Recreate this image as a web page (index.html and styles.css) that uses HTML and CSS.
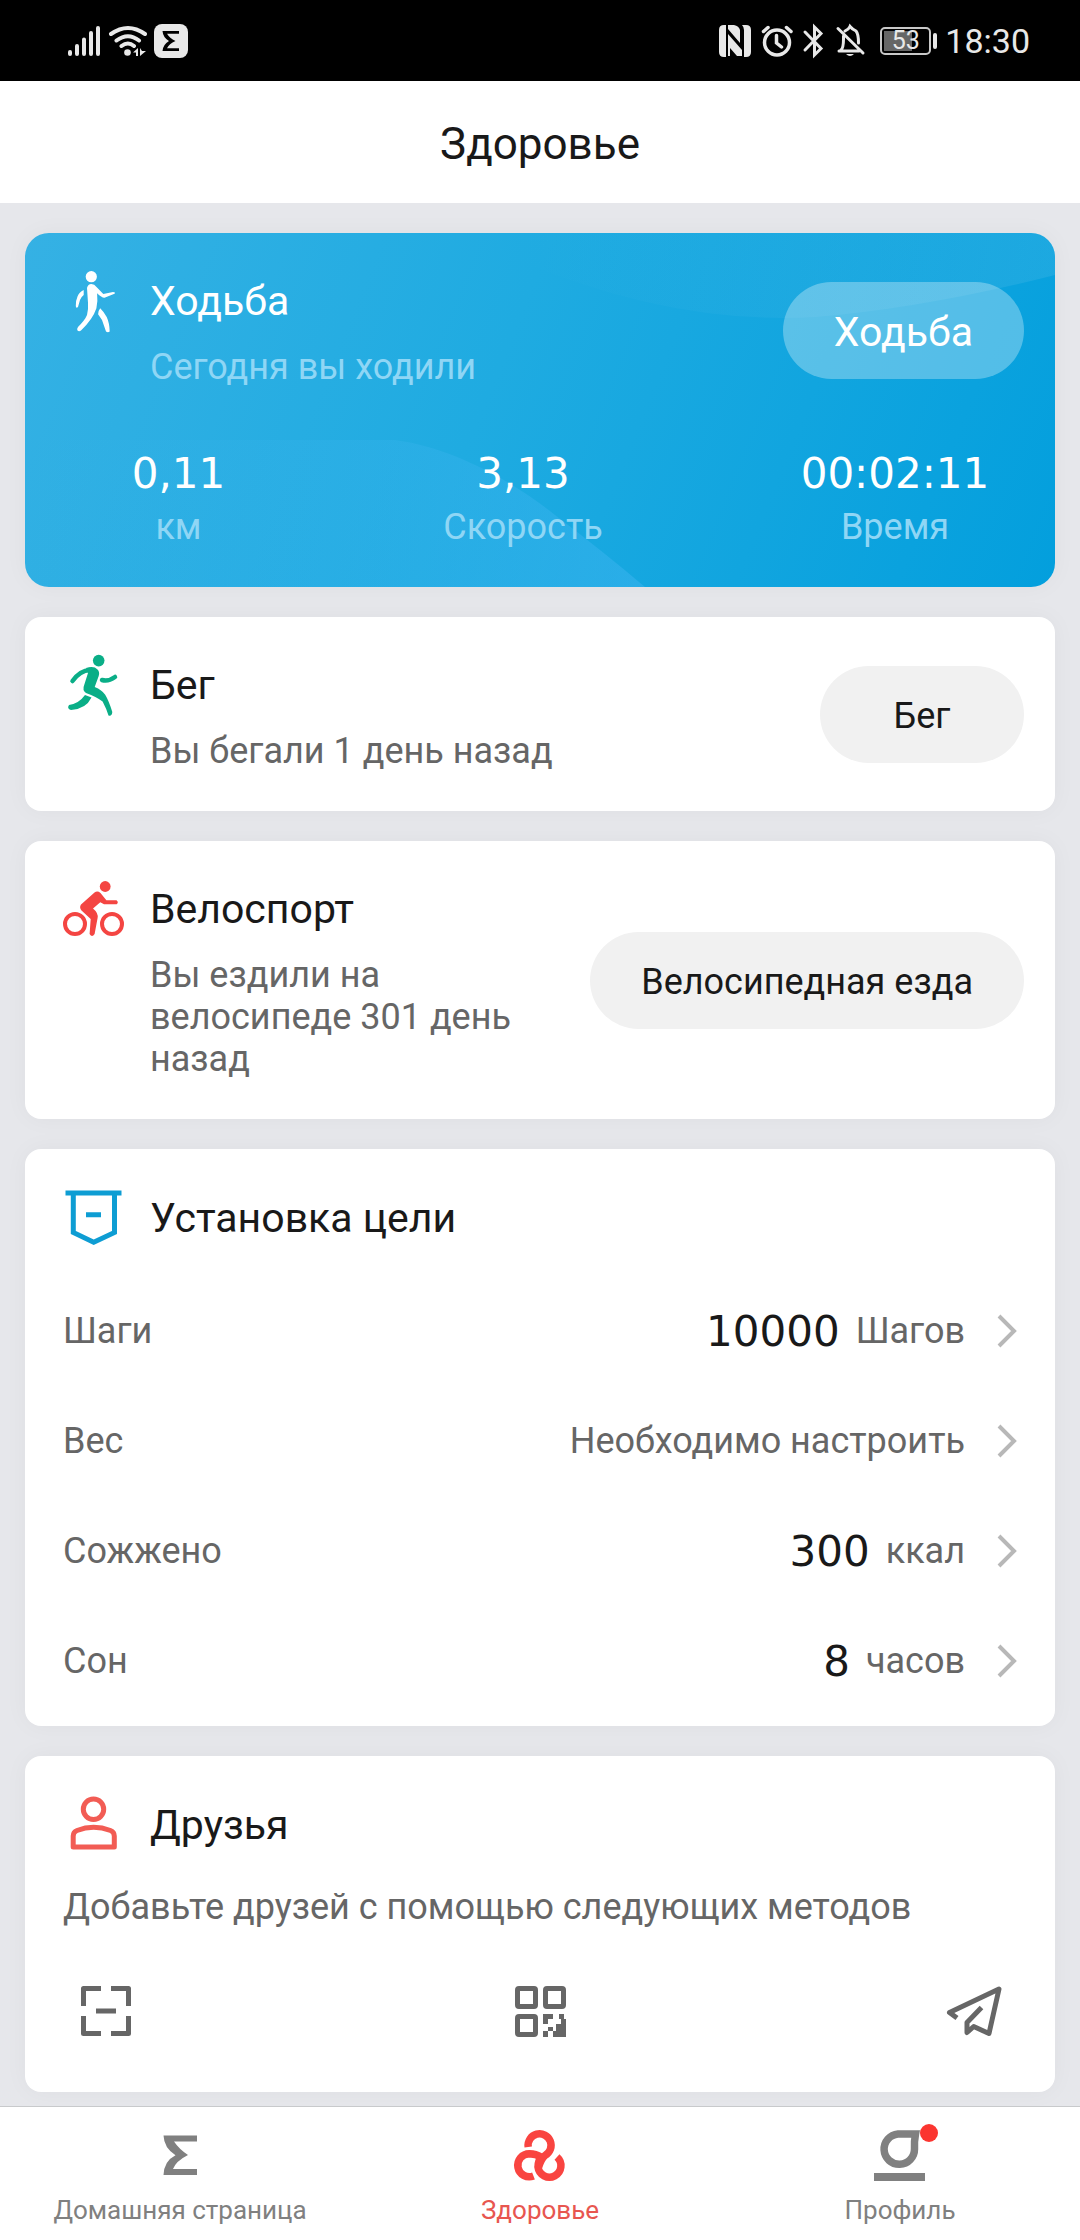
FILE: index.html
```html
<!DOCTYPE html>
<html lang="ru">
<head>
<meta charset="utf-8">
<meta name="viewport" content="width=device-width, initial-scale=1">
<title>Здоровье</title>
<link rel="stylesheet" href="styles.css">
</head>
<body>
<div class="page">
  <div class="status">
    <svg class="status-left" width="122" height="36" viewBox="67 22 122 36" aria-hidden="true">
      <g stroke="#e8e8e8" stroke-width="4" stroke-linecap="round" fill="none">
        <path d="M70 51V53M77 45V53M84 38.500V53M91 32V53M98 27V53"/>
        <path d="M111 33Q128 21 145 33M116.500 39.500Q128 31 139 39.500M121.500 45Q128 40 134 45"/>
      </g>
      <circle cx="127.500" cy="51.500" r="3.300" fill="#e8e8e8"/>
      <path d="M133 51.500l5-4.500v8h-2v-3.500zM140 47v8l6-5h-4z" fill="#e8e8e8"/>
      <rect x="154" y="23" width="34" height="34" rx="8" fill="#e8e8e8"/>
      <path d="M162.500 30H179V32.800H167Q169.500 37 175.500 40Q169 43 167 47.200H179V50H162.500Q163 43.500 169 40Q163 36.500 162.500 30Z" fill="#000"/>
    </svg>
    <div class="status-right">
      <svg width="148" height="36" viewBox="717 22 148 36" aria-hidden="true">
        <path d="M723 24H725V56H723Q718 56 718 51V29Q718 24 723 24ZM727 24H733Q738 25 739 29V42L727 28ZM727 33L741 49V55H736L729 47V55H727ZM741 24H745Q750 24 750 29V51Q750 56 745 56H743V29Q743 26 741 24Z" fill="#e8e8e8"/>
        <g fill="none" stroke="#e8e8e8" stroke-width="3.500" stroke-linecap="round">
          <circle cx="776" cy="41.500" r="12.500"/>
          <path d="M775.500 34.500V42L780.500 46M762.500 30.500L767 26.500M785.500 26.500L790 30.500"/>
          <path d="M804 31L820 47.500L813.500 54V26L820 32.500L804 49" stroke-width="3"/>
          <path d="M837 27.500L862 52M838 50H858M840 49Q842.500 47 842.500 38V35M844 30Q848 28 849 25.500Q851 28 855 30Q857.500 33 857.500 42" stroke-width="3"/>
        </g>
        <path d="M845 53H853Q849 57 845 53Z" fill="#e8e8e8"/>
      </svg>
      <span class="battery"><span class="battery-level">53</span></span>
      <time class="clock">18:30</time>
    </div>
  </div>

  <header class="topbar"><h1>Здоровье</h1></header>

  <main class="cards">
    <section class="card walk">
      <svg class="walk-bg" viewBox="0 0 1030 354" preserveAspectRatio="none" aria-hidden="true">
        <defs>
          <linearGradient id="hill" x1="0" x2="1" y1="0" y2="0">
            <stop offset="0" stop-color="#48b8f4" stop-opacity="0"/>
            <stop offset=".6" stop-color="#48b8f4" stop-opacity=".2"/>
            <stop offset="1" stop-color="#48b8f4" stop-opacity=".4"/>
          </linearGradient>
          <linearGradient id="sky" x1="0" x2="1" y1="0" y2="0">
            <stop offset="0" stop-color="#6cc4ea" stop-opacity="0"/>
            <stop offset="1" stop-color="#6cc4ea" stop-opacity=".2"/>
          </linearGradient>
        </defs>
        <path d="M0 207H370C430 215 490 250 530 282Q580 320 620 354H0Z" fill="url(#hill)"/>
        <path d="M500 30Q650 92 790 84Q900 75 1030 42V0H500Z" fill="url(#sky)"/>
      </svg>
      <div class="activity">
        <svg class="icon" width="60" height="68" viewBox="63 267 60 68" fill="#fff" aria-hidden="true">
          <circle cx="91.300" cy="276.700" r="5.600"/>
          <path d="M87 288Q88 284 91.300 284Q94.500 284 96.500 287L103.300 294L113 292Q116 292 114.500 293.700L104.500 297.700Q102 298 97.100 293.300Q98 301 96.400 308.300Q93 319 81 330.500Q79 332 77.500 330.500Q76.500 329 78 327Q85 320 87 315Q88.500 309 88 303Z"/>
          <path d="M83.700 290V295Q81 297 80 300L78 307Q76 309 75.800 306Q75.500 301 77.500 296.500Q79 292 83.700 290Z"/>
          <path d="M100.200 308.300Q98 311 98.100 314.300L102 320L106 331.500Q108 333 109.700 331.500Q109.500 323 106.700 317Q104 312 100.200 308.300Z"/>
        </svg>
        <div class="activity-text">
          <h2>Ходьба</h2>
          <p>Сегодня вы ходили</p>
        </div>
        <button class="pill pill-walk" type="button">Ходьба</button>
      </div>
      <dl class="stats">
        <div><dd>0,11</dd><dt>км</dt></div>
        <div><dd>3,13</dd><dt>Скорость</dt></div>
        <div><dd>00:02:11</dd><dt>Время</dt></div>
      </dl>
    </section>

    <section class="card">
      <div class="activity">
        <svg class="icon" width="60" height="68" viewBox="63 651 60 68" aria-hidden="true">
          <g fill="#0aae87"><circle cx="98.700" cy="660.600" r="5.800"/>
          <path d="M86 668Q94 665.500 97.500 669.500Q100 672 98.700 676L94.700 687Q102 690 105.200 694.700Q109 701 112.300 712Q112 716.500 108.500 715.500Q106.500 709 102.600 701.600Q97 697 86 693Q82 690 84.200 685L88 673Z"/></g>
          <g fill="none" stroke="#0aae87" stroke-width="4.500" stroke-linecap="round"><path d="M72.500 681Q80 670.500 90 670"/><path d="M102 680Q108 682 115 677"/></g>
          <path d="M85 695L91.500 697.500Q86 709 71 710Q66.500 708.500 69 705Q79 703.500 85 695Z" fill="#0aae87"/>
        </svg>
        <div class="activity-text">
          <h2>Бег</h2>
          <p>Вы бегали 1 день назад</p>
        </div>
        <button class="pill" type="button">Бег</button>
      </div>
    </section>

    <section class="card">
      <div class="activity">
        <svg class="icon" width="60" height="68" viewBox="63 875 60 68" aria-hidden="true">
          <g fill="none" stroke="#f44542" stroke-width="4"><circle cx="75" cy="924" r="10"/><circle cx="112" cy="924" r="10"/></g>
          <g fill="#f44542"><circle cx="105.200" cy="886.500" r="5.400"/>
          <path d="M94.500 892.500Q97.500 890.500 100.500 893L106.400 900.300H116.500Q119 902.500 116.700 904.300H104L100.300 902.300L93 908.500Q98.500 913 97.600 918L94.600 934Q92 938 89.600 934L90.700 919L81.500 910.500Q79 907.500 81 904.500Z"/></g>
        </svg>
        <div class="activity-text">
          <h2>Велоспорт</h2>
          <p>Вы ездили на велосипеде 301 день назад</p>
        </div>
        <button class="pill" type="button">Велосипедная езда</button>
      </div>
    </section>

    <section class="card">
      <div class="card-head">
        <svg class="icon" width="60" height="60" viewBox="63 1188 60 60" fill="none" stroke="#0e9dd3" stroke-width="5" aria-hidden="true">
          <path d="M65.500 1193H121.500M73.300 1193V1232.500L93.700 1242.200L114.500 1232.500V1193M86 1214.700H101"/>
        </svg>
        <h2>Установка цели</h2>
      </div>
      <ul class="goals">
        <li><a href="#steps"><span>Шаги</span><span class="goal-value"><b>10000</b>Шагов</span><svg width="20" height="34" viewBox="0 0 20 34" aria-hidden="true"><path d="M2 2L17 17L2 32"/></svg></a></li>
        <li><a href="#weight"><span>Вес</span><span class="goal-value">Необходимо настроить</span><svg width="20" height="34" viewBox="0 0 20 34" aria-hidden="true"><path d="M2 2L17 17L2 32"/></svg></a></li>
        <li><a href="#burned"><span>Сожжено</span><span class="goal-value"><b>300</b>ккал</span><svg width="20" height="34" viewBox="0 0 20 34" aria-hidden="true"><path d="M2 2L17 17L2 32"/></svg></a></li>
        <li><a href="#sleep"><span>Сон</span><span class="goal-value"><b>8</b>часов</span><svg width="20" height="34" viewBox="0 0 20 34" aria-hidden="true"><path d="M2 2L17 17L2 32"/></svg></a></li>
      </ul>
    </section>

    <section class="card">
      <div class="card-head card-head-friends">
        <svg class="icon" width="60" height="60" viewBox="63 1795 60 60" fill="none" stroke="#f25c54" stroke-width="5" stroke-linejoin="round" aria-hidden="true">
          <circle cx="93.500" cy="1809.300" r="10.200"/>
          <path d="M73.200 1847V1836Q73.200 1832 77 1830.500Q93.500 1824 110.500 1830.500Q114.300 1832 114.300 1836V1847Z"/>
        </svg>
        <h2>Друзья</h2>
      </div>
      <p class="friends-text">Добавьте друзей с помощью следующих методов</p>
      <div class="methods">
        <button type="button" aria-label="Сканировать код">
          <svg width="60" height="60" viewBox="0 0 60 60" fill="none" stroke="#666" stroke-width="5" stroke-linejoin="round">
            <path d="M7.500 25V7.500H25M35 7.500H52.500V25M52.500 35V52.500H35M25 52.500H7.500V35M20 30H40"/>
          </svg>
        </button>
        <button type="button" aria-label="Мой QR-код">
          <svg width="60" height="60" viewBox="0 0 60 60">
            <g fill="none" stroke="#666" stroke-width="5"><rect x="7.500" y="7.500" width="18" height="18" rx="1.500"/><rect x="35.500" y="7.500" width="18" height="18" rx="1.500"/><rect x="7.500" y="35.500" width="18" height="18" rx="1.500"/></g>
            <path d="M33 33h10v5h-5v5h-5zM49 33h5v5h2v18H43v-6h3v-7h5v-5h-2zM38 46h5v4h-5zM33 50h5v6h-5z" fill="#666"/>
          </svg>
        </button>
        <button type="button" aria-label="Отправить приглашение">
          <svg width="60" height="60" viewBox="944 1981 60 60" fill="none" stroke="#666" stroke-width="5" stroke-linejoin="round">
            <path d="M957 2018L949.500 2012.500L999 1989L989 2033.500L973.700 2026.500L967 2032.500V2022.500L981.500 2007.500"/>
          </svg>
        </button>
      </div>
    </section>
  </main>

  <nav class="tabs">
    <a href="#home"><svg width="60" height="56" viewBox="149 2128 60 56" aria-hidden="true"><path d="M162.500 2135.500H196V2141.500H173Q178 2149 187 2155Q175 2161 172 2169H196V2175H162.500Q163 2161 174.500 2155.200Q163 2148 162.500 2135.500Z" fill="#808080"/></svg><span>Домашняя страница</span></a>
    <a href="#health" class="active" aria-current="page"><svg width="60" height="56" viewBox="-4 -2 60 56" fill="none" stroke="#f94440" stroke-width="7.500" aria-hidden="true"><path d="M14.200 17A11.500 11.500 0 1 1 31 25.500Q27 29 24.300 38"/><path d="M19.500 46A11.500 11.500 0 1 1 15.300 23.800Q22 24 27 27"/><path d="M43 27A11.500 11.500 0 1 1 24 37Q24 31 27 28"/></svg><span>Здоровье</span></a>
    <a href="#profile"><svg width="60" height="56" viewBox="870 2128 60 56" aria-hidden="true"><path d="M898 2134H915.500Q914 2142 914.500 2149A15.200 15.200 0 1 1 898 2134Z" fill="none" stroke="#808080" stroke-width="7.500"/><path d="M874 2173H925V2181H874Z" fill="#808080"/></svg><i class="dot"></i><span>Профиль</span></a>
  </nav>
</div>
</body>
</html>
```
FILE: styles.css
```css
* { box-sizing: border-box; }

body {
  margin: 0;
  background: #e6e7eb;
  color: #191919;
  font-family: Roboto, "Noto Sans", sans-serif;
  font-size: 36px;
  line-height: 42px;
}

h1, h2, p, dl, dd, dt, ul { margin: 0; padding: 0; font-weight: 400; }
h2 { font-size: 41px; line-height: 50px; }
svg { display: block; flex: none; }
button { border: 0; padding: 0; background: none; font: inherit; color: inherit; }
a { color: inherit; text-decoration: none; }

.page { display: flex; flex-direction: column; min-height: 100vh; }

/* Status bar */
.status {
  display: flex;
  align-items: center;
  justify-content: space-between;
  height: 81px;
  padding: 0 50px 0 67px;
  background: #000;
  color: #e8e8e8;
}
.status-right { display: flex; align-items: center; gap: 14px; }
.battery {
  position: relative;
  width: 51px;
  height: 28px;
  border: 2px solid #c8c8c8;
  border-radius: 5px;
}
.battery::after {
  content: "";
  position: absolute;
  left: 51px;
  top: 4px;
  width: 4px;
  height: 16px;
  border-radius: 2px;
  background: #e8e8e8;
}
.battery-level {
  display: block;
  margin: 2px;
  background: linear-gradient(90deg, #666 28px, transparent 28px);
  font-size: 25px;
  line-height: 20px;
  text-align: center;
}
.clock { font-size: 34px; line-height: 40px; }

/* Title bar */
.topbar {
  display: flex;
  align-items: center;
  justify-content: center;
  height: 122px;
  padding-top: 4px;
  background: #fff;
}
h1 { font-size: 44px; line-height: 53px; }

/* Cards */
.cards {
  display: flex;
  flex: 1;
  flex-direction: column;
  gap: 30px;
  padding: 30px 25px 14px;
}
.card {
  border-radius: 16px;
  background: #fff;
  box-shadow: 0 0 24px rgba(0, 0, 0, .04);
}
.activity {
  display: flex;
  align-items: center;
  padding: 43px 31px 39px 38px;
}
.activity .icon { align-self: flex-start; margin-top: -9px; overflow: visible; }
.activity-text {
  flex: 1;
  display: grid;
  gap: 20px;
  padding: 0 51px 0 27px;
}
.activity-text p { color: #666; }
.pill {
  flex: none;
  min-width: 204px;
  height: 97px;
  margin-bottom: 4px;
  padding: 3px 51px 0;
  border-radius: 49px;
  background: #f1f1f1;
}

.walk {
  position: relative;
  overflow: hidden;
  border-radius: 24px;
  background: linear-gradient(112deg, #35b1e4 0%, #1fabe1 45%, #039fdd 100%);
  color: #fff;
}
.walk-bg { position: absolute; inset: 0; width: 100%; height: 100%; }
.walk .activity { position: relative; padding-bottom: 0; }
.walk .activity-text p, .stats dt { color: #8fd6f5; }
.pill-walk { background: rgba(255, 255, 255, .3); font-size: 41px; line-height: 50px; }

.stats {
  position: relative;
  display: grid;
  grid-template-columns: 265fr 424fr 320fr;
  padding: 61px 0 39px 21px;
  text-align: center;
}
.stats div { display: flex; flex-direction: column; gap: 8px; }
.stats dd, .goals b {
  font-family: "DejaVu Sans", sans-serif;
  font-size: 42px;
  font-weight: 400;
  line-height: 49px;
}

.card-head { display: flex; align-items: center; gap: 27px; padding: 39px 38px 28px; }

.goals { padding-bottom: 10px; list-style: none; }
.goals a {
  display: flex;
  align-items: center;
  height: 110px;
  padding: 0 38px;
  color: #666;
}
.goal-value {
  display: flex;
  align-items: center;
  gap: 16px;
  margin: 0 32px 0 auto;
}
.goals b { color: #191919; }
.goals path { fill: none; stroke: #b8b8b8; stroke-width: 4; }

.card-head-friends { padding-bottom: 31px; }
.friends-text { padding: 0 38px; color: #666; }
.methods {
  display: flex;
  justify-content: space-between;
  padding: 53px 51px 51px;
}

/* Bottom tabs */
.tabs {
  position: sticky;
  bottom: 0;
  display: grid;
  grid-template-columns: repeat(3, 1fr);
  height: 134px;
  border-top: 1px solid #c8cacc;
  background: #fff;
  color: #808080;
  font-size: 26px;
  line-height: 32px;
}
.tabs a {
  position: relative;
  display: flex;
  flex-direction: column;
  align-items: center;
  gap: 10px;
  padding-top: 21px;
}
.tabs .active { color: #e85650; }
.dot {
  position: absolute;
  left: calc(50% + 20px);
  top: 17px;
  width: 18px;
  height: 18px;
  border-radius: 50%;
  background: #fb3530;
}
```
